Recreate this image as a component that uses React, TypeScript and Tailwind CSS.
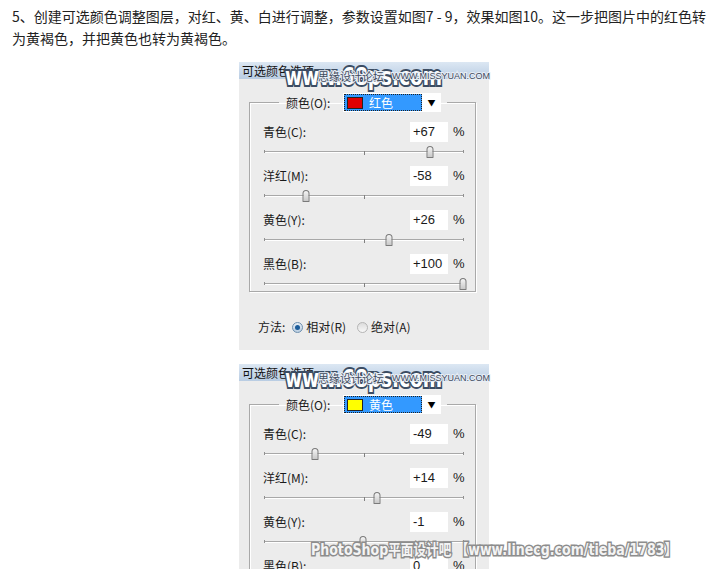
import React from "react";

type Row = { label: string; value: string; pos: number };

const cjk = "font-['SimSun','Noto_Sans_CJK_SC',sans-serif]";

const redRows: Row[] = [
  { label: "青色(C):", value: "+67", pos: 67 },
  { label: "洋红(M):", value: "-58", pos: -58 },
  { label: "黄色(Y):", value: "+26", pos: 26 },
  { label: "黑色(B):", value: "+100", pos: 100 },
];

const yellowRows: Row[] = [
  { label: "青色(C):", value: "-49", pos: -49 },
  { label: "洋红(M):", value: "+14", pos: 14 },
  { label: "黄色(Y):", value: "-1", pos: -1 },
  { label: "黑色(B):", value: "0", pos: 0 },
];

const Slider = ({ pos }: { pos: number }) => {
  // track spans 199px, centre tick in the middle
  const left = 99.5 + (pos / 100) * 99.5;
  return (
    <div className="relative h-4 w-[200px] ml-[1px]">
      <div className="absolute left-0 right-0 top-[9px] h-[1px] bg-[#a8a8a8]" />
      <div className="absolute left-0 right-0 top-[10px] h-[1px] bg-white" />
      <div className="absolute left-0 top-[8px] h-[3px] w-[1px] bg-[#909090]" />
      <div className="absolute left-[100px] top-[9px] h-[4px] w-[1px] bg-[#808080]" />
      <div className="absolute right-0 top-[8px] h-[3px] w-[1px] bg-[#909090]" />
      <div
        className="absolute top-[4px] h-[12px] w-[7px] -translate-x-1/2 rounded-t-[4px] rounded-b-[1px] border border-[#7a7a7a] bg-gradient-to-b from-[#f4f4f4] to-[#c9c9c9]"
        style={{ left }}
      />
    </div>
  );
};

const Dialog = ({
  swatch,
  colorName,
  rows,
  showMethod,
}: {
  swatch: string;
  colorName: string;
  rows: Row[];
  showMethod: boolean;
}) => (
  <div className={`relative w-[250px] bg-[#ececec] ${cjk} text-[12px] text-[#1a1a1a]`}>
    {/* title bar */}
    <div className="h-[17px] bg-gradient-to-b from-[#dce7f3] to-[#b9cde3] pl-[3px] text-[12px] leading-[17px] text-[#111]">
      可选颜色选项
    </div>
    <div className={showMethod ? "pt-[14px] pl-[10px] pb-[14px]" : "pt-[14px] pl-[10px]"}>
      <fieldset className="w-[227px] border border-[#a9a9a9] pl-[13px] pb-[1px] pt-[10px] shadow-[inset_1px_1px_0_#fff,1px_1px_0_#fff]">
        <legend className="ml-[16px] px-[6px]">
          <div className="flex h-[19px] items-center">
            <span className="w-[58px] pl-[1px]">颜色(O):</span>
            <div className="flex h-[19px] w-[98px] items-center bg-white">
              <div className="ml-[1px] flex h-[17px] w-[78px] items-center border border-dotted border-[#222] bg-[#3399ff] pl-[2px]">
                <span className="h-[12px] w-[16px] border border-[#222]" style={{ background: swatch }} />
                <span className="ml-[6px] text-[12px] leading-none text-white">{colorName}</span>
              </div>
              <span className="flex-1 text-center text-[8px] leading-none text-black">▼</span>
            </div>
          </div>
        </legend>
        {rows.map((r, i) => (
          <div key={r.label} className={i < rows.length - 1 ? "mb-[8px]" : ""}>
            <div className="flex h-5 items-center">
              <span className="w-[147px]">{r.label}</span>
              <div className="flex h-5 w-[38px] items-center bg-white pl-[3px] font-['Liberation_Sans',sans-serif] text-[13px]">
                {r.value}
              </div>
              <span className="ml-[5px] font-['Liberation_Sans',sans-serif] text-[13px]">%</span>
            </div>
            <Slider pos={r.pos} />
          </div>
        ))}
      </fieldset>
      {showMethod && (
        <div className="mt-[26px] flex items-center pl-[9px] text-[12px]">
          <span>方法:</span>
          <span className="ml-[7px] flex h-[11px] w-[11px] items-center justify-center rounded-full border border-[#6d8fae] bg-gradient-to-b from-[#e6eef6] to-[#b9cde0]">
            <span className="h-[5px] w-[5px] rounded-full bg-[#1b5c9a]" />
          </span>
          <span className="ml-[3px]">相对(R)</span>
          <span className="ml-[11px] h-[11px] w-[11px] rounded-full border border-[#b5b5b5] bg-gradient-to-b from-[#dcdcdc] to-[#f8f8f8]" />
          <span className="ml-[3px]">绝对(A)</span>
        </div>
      )}
    </div>
    {/* watermarks over the title bar */}
    <div className="pointer-events-none absolute left-[46px] top-[1px] origin-left scale-x-[0.74] whitespace-nowrap font-['DejaVu_Sans',sans-serif] text-[25px] font-bold leading-[28px] text-white [-webkit-text-stroke:4px_#3c4d63] [paint-order:stroke_fill]">
      www.68ps.com
    </div>
    <div className="pointer-events-none absolute left-[79px] top-[9px] flex items-center whitespace-nowrap text-[#3f4a5c]">
      <span className="text-[11px] leading-none [-webkit-text-stroke:2px_#e8eef6] [paint-order:stroke_fill]">思缘设计论坛</span>
      <span className="ml-[8px] font-['Liberation_Sans',sans-serif] text-[9px] leading-none [-webkit-text-stroke:2px_#e8eef6] [paint-order:stroke_fill]">
        WWW.MISSYUAN.COM
      </span>
    </div>
  </div>
);

export default function App() {
  return (
    <div className="relative h-[569px] w-[719px] overflow-hidden bg-white">
      <p className={`pl-[12px] pt-[5px] ${cjk} text-[14px] leading-[22px] text-[#222]`}>
        5、创建可选颜色调整图层，对红、黄、白进行调整，参数设置如图7 - 9，效果如图10。这一步把图片中的红色转
        <br />
        为黄褐色，并把黄色也转为黄褐色。
      </p>
      <div className="ml-[239px] mt-[13px]">
        <Dialog swatch="#e00000" colorName="红色" rows={redRows} showMethod />
      </div>
      <div className="ml-[239px] mt-[14px]">
        <Dialog swatch="#ffff00" colorName="黄色" rows={yellowRows} showMethod={false} />
      </div>
      <div className="pointer-events-none absolute left-[311px] top-[540px] origin-left scale-x-[0.84] whitespace-nowrap font-['DejaVu_Sans','Noto_Sans_CJK_SC',sans-serif] text-[15px] font-bold leading-[20px] text-[#f4f4f4] [-webkit-text-stroke:3px_#8d8d8d] [paint-order:stroke_fill]">
        PhotoShop平面设计吧 【www.linecg.com/tieba/1783】
      </div>
    </div>
  );
}
